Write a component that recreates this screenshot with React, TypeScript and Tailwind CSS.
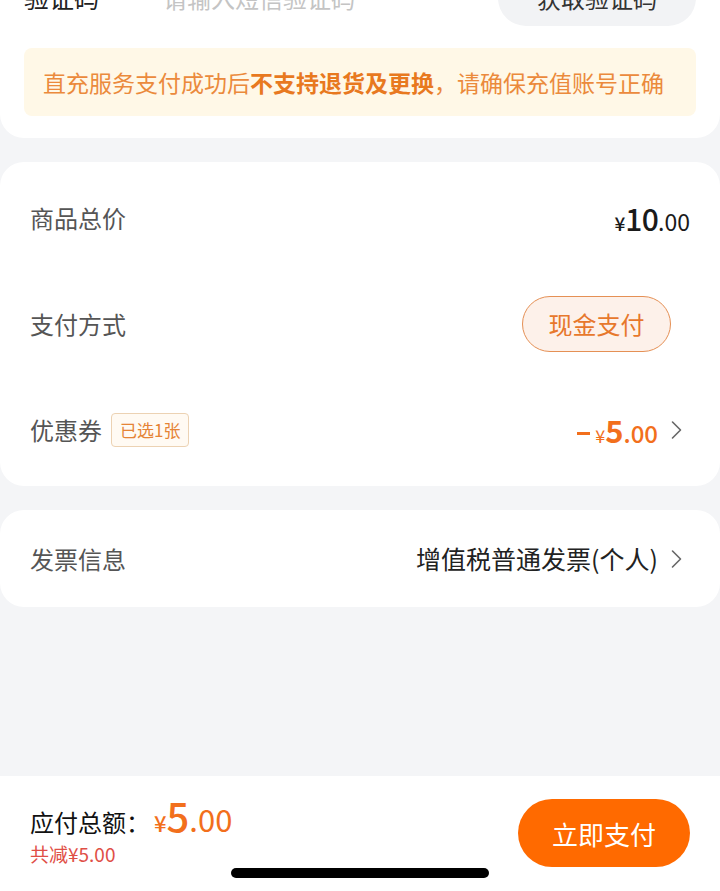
const font = { fontFamily: '"Noto Sans CJK SC", "Noto Sans", sans-serif' };

function Chevron() {
  return (
    <svg className="ml-[13px] mr-[8px]" width="11" height="20" viewBox="0 0 11 20" fill="none">
      <polyline points="1.5,2 9.5,10 1.5,18" stroke="#666" strokeWidth="1.6" strokeLinecap="round" strokeLinejoin="round" />
    </svg>
  );
}

function Row({ label, children }: { label: React.ReactNode; children: React.ReactNode }) {
  return (
    <div className="flex h-[106px] items-center justify-between pl-[30px] pr-[30px]">
      <div className="flex items-center gap-[9px] text-[24px] text-[#555]">{label}</div>
      <div className="flex items-center">{children}</div>
    </div>
  );
}

export default function App() {
  return (
    <div className="relative flex min-h-[891px] w-[720px] flex-col overflow-hidden bg-[#f4f5f7]" style={font}>
      {/* verify code card, scrolled so only its bottom shows */}
      <div className="-mt-[30px] rounded-b-[24px] bg-white px-6 pb-[22px]">
        <div className="flex h-14 items-center">
          <span className="w-[139px] text-[25px] text-[#222]">验证码</span>
          <span className="flex-1 text-[24px] text-[#c4c4c4]">请输入短信验证码</span>
          <button className="h-14 w-[198px] rounded-full bg-[#f2f3f5] text-[24px] text-[#333]">获取验证码</button>
        </div>
        <div className="mt-[22px] flex h-[68px] items-center rounded-[8px] bg-[#fff8e7] px-[19px] text-[23px] text-[#eb8a3c]">
          <span>直充服务支付成功后</span>
          <span className="font-bold text-[#e8791f]">不支持退货及更换</span>
          <span>，请确保充值账号正确</span>
        </div>
      </div>

      <div className="mt-6 rounded-[24px] bg-white py-[3px]">
        <Row label="商品总价">
          <span className="flex items-baseline text-[#1a1a1a]">
            <span className="text-[19px] font-medium">¥</span>
            <span className="text-[30px] font-medium tracking-tight">10</span>
            <span className="text-[23px]">.00</span>
          </span>
        </Row>
        <Row label="支付方式">
          <span className="mr-[19px] flex h-14 w-[149px] items-center justify-center rounded-full border border-[#e59055] bg-[#fdf1ea] text-[24px] text-[#e7782c]">
            现金支付
          </span>
        </Row>
        <Row
          label={
            <>
              <span>优惠券</span>
              <span className="flex h-[34px] items-center rounded-[4px] border border-[#ecd2b3] bg-[#fffaf3] px-[8px] text-[17px] text-[#e58436]">
                已选1张
              </span>
            </>
          }
        >
          <span className="flex items-baseline text-[#f26f1c]">
            <span className="mr-[5px] inline-block h-[3px] w-[13px] -translate-y-[8px] bg-[#f26f1c]" />
            <span className="text-[18px]">¥</span>
            <span className="text-[31px] font-bold">5</span>
            <span className="text-[24px] font-medium">.00</span>
          </span>
          <Chevron />
        </Row>
      </div>

      <div className="mt-6 flex h-[97px] items-center justify-between rounded-[24px] bg-white pl-[30px] pr-[30px]">
        <span className="text-[24px] text-[#555]">发票信息</span>
        <span className="flex items-center text-[25px] text-[#222]">
          增值税普通发票(个人)
          <Chevron />
        </span>
      </div>

      <div className="flex-1" />

      {/* bottom pay bar */}
      <div className="flex h-[115px] items-start justify-between bg-white pl-[30px] pr-[30px] pt-[18px]">
        <div className="flex flex-col">
          <div className="flex items-baseline">
            <span className="text-[24px] text-[#111]">应付总额：</span>
            <span className="ml-[4px] text-[22px] font-medium text-[#f26f1c]">¥</span>
            <span className="text-[40px] font-medium leading-[42px] text-[#f26f1c]">5</span>
            <span className="text-[31px] text-[#f26f1c]">.00</span>
          </div>
          <span className="-mt-[3px] text-[19px] text-[#df4f47]">共减¥5.00</span>
        </div>
        <button className="mt-[5px] h-[68px] w-[172px] rounded-full bg-[#ff6a00] text-[26px] text-white">立即支付</button>
      </div>

      {/* home indicator */}
      <div className="absolute bottom-[13px] left-[231px] h-[10px] w-[258px] rounded-full bg-black" />
    </div>
  );
}
